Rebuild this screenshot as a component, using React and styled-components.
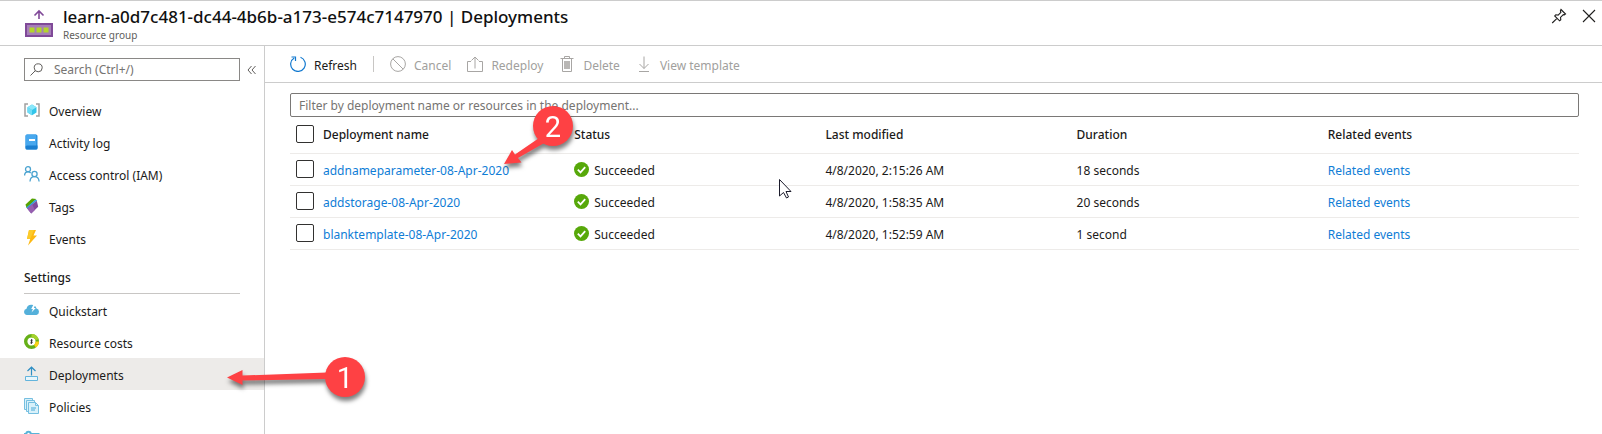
import React from 'react';
import styled, { createGlobalStyle, css } from 'styled-components';

const GlobalStyle = createGlobalStyle`
  *, *::before, *::after { box-sizing: border-box; }
  body { margin: 0; background: #fff; }
  body, button, input { font-family: "Noto Sans", "Open Sans", sans-serif; font-size: 12px; line-height: 16px; color: #1b1a19; }
`;

const Blade = styled.div`
  position: relative;
  display: flex;
  flex-direction: column;
  height: 100vh;
  overflow: hidden;
  border-top: 1px solid #ccc;
`;

const Header = styled.header`
  display: flex;
  align-items: center;
  flex: none;
  height: 45px;
  padding: 0 5px 0 24px;
  gap: 10px;
  border-bottom: 1px solid #ccc;
`;

const Heading = styled.div`
  flex: 1;
  min-width: 0;
`;

const Title = styled.h1`
  margin: 0;
  font-size: 17px;
  line-height: 24px;
  font-weight: 500;
  white-space: nowrap;
  color: #111;
`;

const Subtitle = styled.p`
  margin: 0;
  font-size: 10px;
  line-height: 12px;
  color: #605e5c;
`;

const HeaderActions = styled.div`
  display: flex;
  align-self: flex-start;
  padding-top: 7px;
  gap: 14px;
`;

const IconButton = styled.button`
  display: flex;
  align-items: center;
  justify-content: center;
  padding: 0;
  border: 0;
  background: none;
  color: #323130;
`;

const Body = styled.div`
  display: flex;
  flex: 1;
  min-height: 0;
`;

const Sidebar = styled.nav`
  flex: none;
  width: 265px;
  overflow: hidden;
  border-right: 1px solid #ccc;
`;

const SearchRow = styled.div`
  display: flex;
  align-items: center;
  gap: 7px;
  padding: 12px 8px 13px 24px;
`;

const SearchBox = styled.label`
  display: flex;
  align-items: center;
  gap: 11px;
  width: 216px;
  height: 23px;
  padding: 0 5px;
  border: 1px solid #8a8886;
`;

const fieldText = css`
  outline: 0;
  &::placeholder { color: #767472; opacity: 1; }
`;

const SearchInput = styled.input`
  flex: 1;
  min-width: 0;
  padding: 0;
  border: 0;
  background: none;
  ${fieldText}
`;

const NavList = styled.ul`
  margin: 0;
  padding: 0;
  list-style: none;
`;

const Label = styled.span`
  display: block;
  padding-top: 3px;
`;

const NavLink = styled.a`
  display: flex;
  align-items: center;
  gap: 9px;
  height: 32px;
  padding-left: 24px;
  color: inherit;
  text-decoration: none;
  background: ${(p) => (p.$active ? '#edebe9' : 'none')};
`;

const SectionTitle = styled.h2`
  margin: 16px 24px 0;
  padding-bottom: 7px;
  font-size: 12px;
  line-height: 16px;
  font-weight: 500;
  border-bottom: 1px solid #c8c6c4;
`;

const Main = styled.main`
  flex: 1;
  min-width: 0;
`;

const Toolbar = styled.div`
  display: flex;
  align-items: center;
  height: 37px;
  padding-left: 25px;
  gap: 16px;
  border-bottom: 1px solid #ccc;
`;

const ToolButton = styled.button`
  display: flex;
  align-items: center;
  gap: 8px;
  padding: 0;
  border: 0;
  background: none;
  white-space: nowrap;
  &:disabled { color: #a19f9d; }
`;

const Divider = styled.span`
  width: 1px;
  height: 16px;
  background: #c8c6c4;
`;

const Content = styled.section`
  padding: 10px 23px 0 25px;
`;

const FilterInput = styled.input`
  display: block;
  width: 100%;
  height: 24px;
  padding: 0 8px;
  border: 1px solid #7a7876;
  border-radius: 2px;
  ${fieldText}
`;

const Table = styled.table`
  width: 100%;
  table-layout: fixed;
  border-collapse: collapse;
`;

const Row = styled.tr`
  height: 32px;
  border-bottom: 1px solid #edebe9;
`;

const HeadRow = styled(Row)`
  height: 36px;
`;

const Cell = styled.td`
  padding: 0;
  text-align: left;
  white-space: nowrap;
`;

const HeadCell = styled.th`
  padding: 0;
  text-align: left;
  font-weight: 500;
`;

const CheckCell = styled.td`
  width: 33px;
  padding: 0 0 0 6px;
`;

const HeadCheckCell = styled(CheckCell)`
  padding-bottom: 2px;
`;

const Checkbox = styled.input.attrs({ type: 'checkbox' })`
  appearance: none;
  display: block;
  width: 18px;
  height: 18px;
  margin: 0;
  border: 1px solid #323130;
  border-radius: 2px;
  &:checked { background: #0078d4; }
`;

const Link = styled.a`
  color: #0f7dd6;
  text-decoration: none;
`;

const Status = styled.span`
  display: flex;
  align-items: center;
  gap: 5px;
`;

const Overlay = styled.svg`
  position: absolute;
  top: ${(p) => p.$top}px;
  left: ${(p) => p.$left}px;
  overflow: visible;
  pointer-events: none;
`;

const Marker = styled(Overlay)`
  filter: drop-shadow(1px 4px 2px rgba(0, 0, 0, 0.5));
  fill: #fe4144;

  text {
    fill: #fff;
    font: 29px Roboto, Arial, sans-serif;
    text-anchor: middle;
  }
`;

const Svg = ({ size = 16, w = size, h = size, children, ...rest }) => (
  <svg width={w} height={h} viewBox={`0 0 ${w} ${h}`} fill="none" aria-hidden="true" {...rest}>
    {children}
  </svg>
);

const ResourceGroupIcon = () => (
  <Svg w={29} h={28}>
    <path d="M15 10V2M10.500 6.500L15 2l4.500 4.500" stroke="#804998" strokeWidth="1.600" />
    <path d="M1 14h28v14H1z" fill="#804998" />
    <path d="M3 16h24v10H3z" fill="#a67fb8" />
    <path d="M5.500 18.500h5v5h-5zM12.500 18.500h5v5h-5zM19.500 18.500h5v5h-5z" fill="#b4d52c" />
  </Svg>
);

const navIcons = {
  overview: (
    <Svg>
      <path d="M4 2H1v12h3M12 2h3v12h-3" stroke="#a0a0a0" strokeWidth="1.500" />
      <path d="M8 2.500l4.500 2.700v5.300L8 13.200l-4.500-2.700V5.200z" fill="#32c5ea" />
      <path d="M8 2.500l4.500 2.700L8 8 3.500 5.200z" fill="#8be7fa" />
      <path d="M3.500 5.200L8 8v5.200l-4.500-2.700z" fill="#6fdcf7" />
    </Svg>
  ),
  log: (
    <Svg>
      <rect x="1.500" y=".5" width="12" height="15" rx="1.500" fill="#2d93e0" />
      <path d="M1.500 2q0-1.500 1.500-1.500h9V13H1.500z" fill="#48a8ee" />
      <path d="M1.500 13q0-1.500 1.500-1.500h10.500V14q0 1.500-1.500 1.500H3q-1.500 0-1.500-1.500z" fill="#1b7fd0" />
      <path d="M5 6h6" stroke="#fff" strokeWidth="2" />
    </Svg>
  ),
  access: (
    <Svg stroke="#4aa3d0" strokeWidth="1.300">
      <circle cx="4" cy="3.200" r="2.500" />
      <path d="M.6 9.500C.6 7 2 5.800 4 5.800c1.200 0 2 .4 2.700 1.200" />
      <circle cx="10.500" cy="8" r="2.600" />
      <path d="M6 15.500c.2-3.200 2-4.800 4.500-4.800s4.300 1.600 4.600 4.800" />
    </Svg>
  ),
  tags: (
    <Svg>
      <path d="M1.500 6.500L8 .6l4.300.3L2.600 10z" fill="#57a300" />
      <path d="M2.300 9.500L11.500 1.500l1.800.8L3.500 11z" fill="#32a0d8" />
      <path d="M3.200 10.500L12.800 2.700l1.400 6.100-7 6.700z" fill="#7f4a9c" />
      <path d="M3.200 10.500L8.200 6.300l2.600 5.800-3.600 3.400z" fill="#965fb0" />
    </Svg>
  ),
  events: (
    <Svg>
      <path d="M5 0h7L9.500 5.500H13L4 15.500 6.200 9H3z" fill="#fdb913" />
      <path d="M5 0h5L7 7l-1 2H3z" fill="#fccb2a" />
    </Svg>
  ),
  quickstart: (
    <Svg>
      <path d="M3 13A3.200 3.200 0 0 1 2.500 6.700C3 4 5 2.500 7.500 2.700c2.700.1 4.500 1.500 5 3.900A3.300 3.300 0 0 1 12.500 13z" fill="#54b0da" />
      <path d="M10 1.500L7.200 7h1.700L7.500 10.500 11.800 6h-2L12 1.500z" fill="#fff" />
    </Svg>
  ),
  costs: (
    <Svg>
      <circle cx="7.500" cy="7.500" r="5.800" stroke="#66b018" strokeWidth="3.400" />
      <path d="M7.500 1.700a5.800 5.800 0 0 1 5.500 4" stroke="#a4d12c" strokeWidth="3.400" />
      <path d="M13.300 7.500a5.800 5.800 0 0 1-2.400 4.700" stroke="#fcd116" strokeWidth="3.400" />
      <path d="M8.700 6.200H7.300q-.8.600 0 1.300h.6q.8.700 0 1.400H6.300M7.500 5.200v4.600" stroke="#333" />
    </Svg>
  ),
  deployments: (
    <Svg>
      <path d="M7.500 9.500V1.500M3.500 5l4-3.800 4 3.800" stroke="#2f8fc4" strokeWidth="1.200" />
      <path d="M1.500 10.500h12v4h-12z" fill="#e8f6fc" stroke="#63b4dc" />
    </Svg>
  ),
  policies: (
    <Svg stroke="#76bfe0">
      <path d="M.5 11.500V.5h8v11z" fill="#d9f1fa" />
      <path d="M2.500 13.500v-11h8v11z" fill="#d9f1fa" />
      <path d="M4.500 4.500h7l3 3v8h-10z" fill="#d9f1fa" />
      <path d="M11.500 4.500v3h3" />
      <path d="M7 10h5M7 12h4" stroke="#4aa9d6" />
    </Svg>
  ),
  properties: (
    <Svg stroke="#59b4d9" strokeWidth="2">
      <path d="M0 4h2M7 4h8.500M0 10h9M14 10h2" />
      <circle cx="4.500" cy="4" r="2.200" />
      <circle cx="11.500" cy="10" r="2.200" />
    </Svg>
  ),
};

const PinIcon = () => (
  <Svg stroke="#201f1e" strokeWidth="1.100">
    <path d="M10 1.500l4.500 4.500-1.200.8-1-.2-2.800 2.800.3 2.300-1.200 1.100L3.700 8l1.100-1.200 2.300.3 2.800-2.800-.5-1.500zM6 10.300L1.200 15" />
  </Svg>
);
const CloseIcon = () => (
  <Svg stroke="#201f1e" strokeWidth="1.100"><path d="M2 2l12 12M14 2L2 14" /></Svg>
);
const SearchIcon = () => (
  <Svg w={13} h={13} stroke="#605e5c">
    <circle cx="8.200" cy="4.800" r="4" />
    <path d="M5.400 7.600L.5 12.500" />
  </Svg>
);
const CollapseIcon = () => (
  <Svg w={9} h={10} stroke="#605e5c"><path d="M4.500 1L1 5l3.500 4M8.500 1L5 5l3.500 4" /></Svg>
);
const RefreshIcon = () => (
  <Svg stroke="#1078cf" strokeWidth="1.200">
    <path d="M10.500 1.300a7.300 7.300 0 1 1-6.300.6" />
    <path d="M1.500 1h4v4" />
  </Svg>
);
const CancelIcon = () => (
  <Svg stroke="#a8a6a4"><circle cx="8" cy="8" r="7.400" /><path d="M2.800 2.800l10.400 10.400" /></Svg>
);
const RedeployIcon = () => (
  <Svg stroke="#a8a6a4">
    <path d="M4 5.500H.5v10h15v-10H12M8 12.500V1M4.500 4.500L8 1l3.500 3.500" />
  </Svg>
);
const DeleteIcon = () => (
  <Svg stroke="#a8a6a4">
    <path d="M1.500 2.500h13M5.500 2.500v-2h5v2M3.500 2.500v13h9v-13" />
    <path d="M5 5h6v8H5z" fill="#b9b7b5" stroke="none" />
  </Svg>
);
const DownloadIcon = () => (
  <Svg stroke="#a8a6a4"><path d="M8 .5v12M3.500 8L8 12.500 12.500 8M3 15.500h10" /></Svg>
);
const SuccessIcon = () => (
  <Svg size={15}>
    <circle cx="7.500" cy="7.500" r="7.500" fill="#57a80a" />
    <path d="M3.800 7.700l2.700 2.700 4.700-5.200" stroke="#fff" strokeWidth="1.800" />
  </Svg>
);

const resourceLinks = [
  ['overview', 'Overview'],
  ['log', 'Activity log'],
  ['access', 'Access control (IAM)'],
  ['tags', 'Tags'],
  ['events', 'Events'],
];
const settingsLinks = [
  ['quickstart', 'Quickstart'],
  ['costs', 'Resource costs'],
  ['deployments', 'Deployments'],
  ['policies', 'Policies'],
  ['properties'],
];
const tools = [
  [CancelIcon, 'Cancel'],
  [RedeployIcon, 'Redeploy'],
  [DeleteIcon, 'Delete'],
  [DownloadIcon, 'View template'],
];
const columns = ['Deployment name', 'Status', 'Last modified', 'Duration', 'Related events'];
const deployments = [
  ['addnameparameter-08-Apr-2020', '4/8/2020, 2:15:26 AM', '18 seconds'],
  ['addstorage-08-Apr-2020', '4/8/2020, 1:58:35 AM', '20 seconds'],
  ['blanktemplate-08-Apr-2020', '4/8/2020, 1:52:59 AM', '1 second'],
];

const NavGroup = ({ links }) => (
  <NavList>
    {links.map(([icon, label]) => (
      <li key={icon}>
        <NavLink
          href={`#${icon}`}
          $active={icon === 'deployments'}
          aria-current={icon === 'deployments' ? 'page' : undefined}
          aria-label={label ? undefined : icon}
        >
          {navIcons[icon]}
          {label && <Label>{label}</Label>}
        </NavLink>
      </li>
    ))}
  </NavList>
);

export default function App() {
  return (
    <Blade>
      <GlobalStyle />
      <Header>
        <ResourceGroupIcon />
        <Heading>
          <Title>learn-a0d7c481-dc44-4b6b-a173-e574c7147970 | Deployments</Title>
          <Subtitle>Resource group</Subtitle>
        </Heading>
        <HeaderActions>
          <IconButton aria-label="Pin"><PinIcon /></IconButton>
          <IconButton aria-label="Close"><CloseIcon /></IconButton>
        </HeaderActions>
      </Header>
      <Body>
        <Sidebar>
          <SearchRow>
            <SearchBox>
              <SearchIcon />
              <SearchInput type="text" placeholder="Search (Ctrl+/)" aria-label="Search" />
            </SearchBox>
            <IconButton aria-label="Collapse menu"><CollapseIcon /></IconButton>
          </SearchRow>
          <NavGroup links={resourceLinks} />
          <SectionTitle>Settings</SectionTitle>
          <NavGroup links={settingsLinks} />
        </Sidebar>
        <Main>
          <Toolbar>
            <ToolButton><RefreshIcon /><Label>Refresh</Label></ToolButton>
            <Divider />
            {tools.map(([Icon, label]) => (
              <ToolButton key={label} disabled><Icon /><Label>{label}</Label></ToolButton>
            ))}
          </Toolbar>
          <Content>
            <FilterInput
              type="text"
              placeholder="Filter by deployment name or resources in the deployment..."
              aria-label="Filter deployments"
            />
            <Table>
              <thead>
                <HeadRow>
                  <HeadCheckCell><Checkbox aria-label="Select all deployments" /></HeadCheckCell>
                  {columns.map((name) => <HeadCell key={name}>{name}</HeadCell>)}
                </HeadRow>
              </thead>
              <tbody>
                {deployments.map(([name, modified, duration]) => (
                  <Row key={name}>
                    <CheckCell><Checkbox aria-label={`Select ${name}`} /></CheckCell>
                    <Cell><Label><Link href={`#${name}`}>{name}</Link></Label></Cell>
                    <Cell><Status><SuccessIcon /><Label>Succeeded</Label></Status></Cell>
                    <Cell><Label>{modified}</Label></Cell>
                    <Cell><Label>{duration}</Label></Cell>
                    <Cell><Label><Link href="#events">Related events</Link></Label></Cell>
                  </Row>
                ))}
              </tbody>
            </Table>
          </Content>
        </Main>
      </Body>
      <Marker $top={356} $left={227} width="138" height="42" viewBox="0 0 138 42" aria-label="Step 1">
        <path d="M0 20.500L15.500 13v5.500L100 15.500v6.500L15.500 23.500V28z" />
        <circle cx="118" cy="20" r="20" />
        <text x="118" y="31">1</text>
      </Marker>
      <Marker $top={105} $left={504} width="70" height="58" viewBox="0 0 70 58" aria-label="Step 2">
        <path d="M0 58L8 44l3 4.500L38 30l4 6-28 16 3.500 4.500z" />
        <circle cx="49" cy="20" r="20" />
        <text x="49" y="31">2</text>
      </Marker>
      <Overlay $top={178} $left={779} width="13" height="20" viewBox="0 0 13 20" aria-hidden="true">
        <path d="M.5 .5v16.500l4-3.500 3 5.500 2-1-2.500-5.500h5z" fill="#fff" stroke="#1b1b2b" />
      </Overlay>
    </Blade>
  );
}
